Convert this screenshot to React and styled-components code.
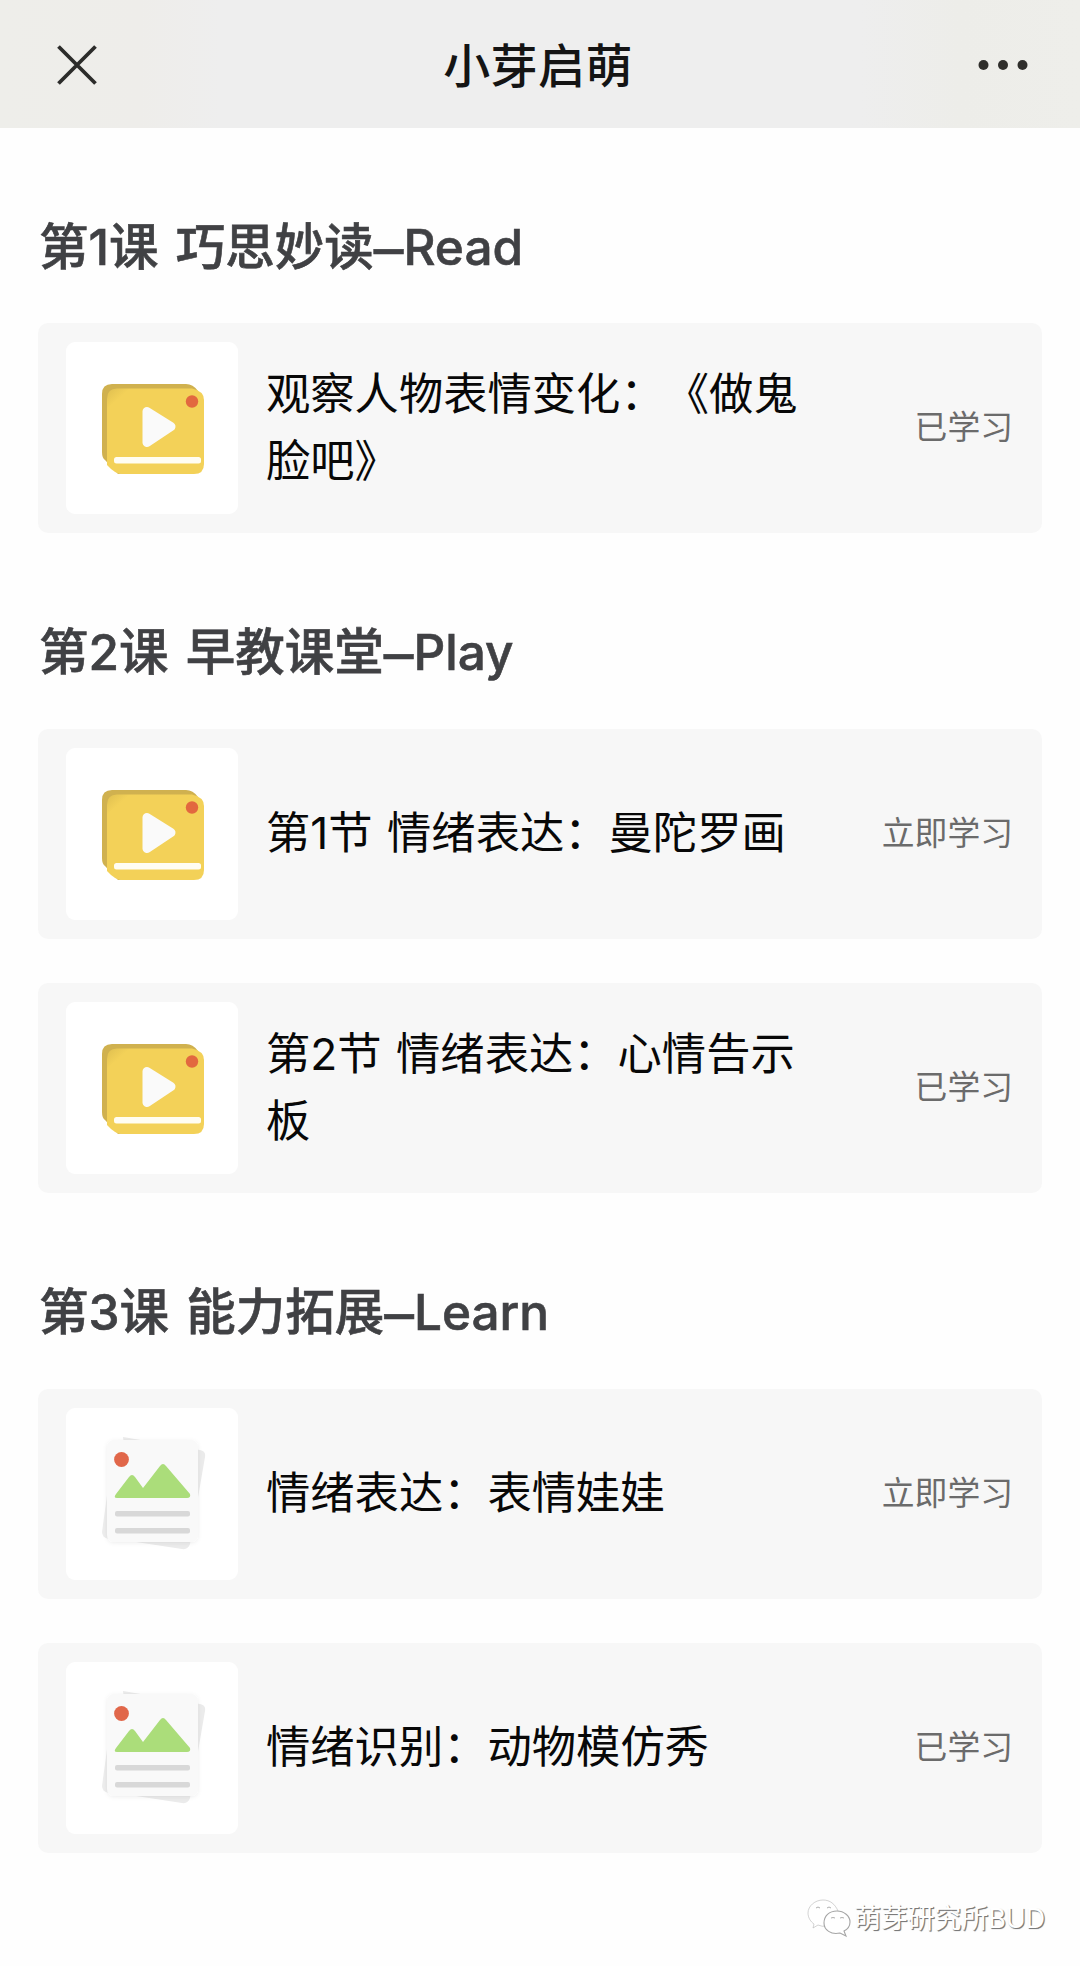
import React from "react";
import styled, { createGlobalStyle } from "styled-components";

const GlobalStyle = createGlobalStyle`
  * { box-sizing: border-box; }
  html, body { margin: 0; padding: 0; background: #fefefe; }
  body {
    font-family: Inter, "Noto Sans CJK SC", sans-serif;
    text-spacing-trim: space-all;
  }
  h1, h2, p { margin: 0; }
`;

const Page = styled.div`
  width: 1080px;
  height: 1966px;
  overflow: hidden;
  background: #fefefe;
  display: flex;
  flex-direction: column;
`;

const Header = styled.header`
  height: 128px;
  flex: none;
  padding: 2px 52px 0 56px;
  display: grid;
  grid-template-columns: 52px 1fr 52px;
  align-items: center;
  background: linear-gradient(90deg, #eeeeea 0, #eeedea 140px, #eeeeee 220px, #eeeeee 860px, #edede9 960px, #eeeeea 100%);
`;

const Title = styled.h1`
  padding: 2px 8px 0 0;
  text-align: center;
  font-size: 47px;
  line-height: 66px;
  font-weight: 500;
  letter-spacing: 0.4px;
  color: #141414;
`;

const HeaderIcon = styled.svg`
  display: block;
  width: ${(p) => p.$w}px;
  height: ${(p) => p.$h}px;
  justify-self: ${(p) => p.$side};
`;

const Content = styled.main`
  flex: 1;
  padding: 0 38px;
`;

const Section = styled.section`
  display: flex;
  flex-direction: column;
`;

const SectionTitle = styled.h2`
  height: ${(p) => (p.$first ? 195 : 196)}px;
  padding: 84px 0 0 1px;
  font-size: 49.5px;
  line-height: 70px;
  font-weight: 500;
  -webkit-text-stroke: 0.6px #404144;
  word-spacing: 4px;
  color: #404144;
  white-space: pre;
`;

const Dash = styled.span`
  font-size: 1.2em;
  line-height: 0;
  font-weight: 400;
  vertical-align: -5px;
`;

const Cards = styled.div`
  display: flex;
  flex-direction: column;
  gap: 44px;
`;

const Card = styled.article`
  height: 210px;
  padding: 0 29px 0 28px;
  display: flex;
  align-items: center;
  background: #f7f7f7;
  border-radius: 10px;
`;

const Thumb = styled.div`
  width: 172px;
  height: 172px;
  flex: none;
  border-radius: 9px;
  background: #fff;
`;

const Art = styled.svg`
  display: block;
  width: 172px;
  height: 172px;
`;

const Name = styled.p`
  width: 560px;
  margin-left: 28px;
  padding-bottom: 1px;
  font-size: 44.3px;
  line-height: 66.5px;
  color: #080808;
  word-spacing: 2px;
  white-space: pre-line;
`;

const Status = styled.span`
  margin-left: auto;
  padding-bottom: 2px;
  font-size: 32.8px;
  line-height: 46px;
  color: #6b6b6b;
  white-space: nowrap;
`;

const Watermark = styled.footer`
  height: 113px;
  padding: 41px 35px 0 0;
  display: flex;
  justify-content: flex-end;
  gap: 2px;
  font-size: 26.8px;
  line-height: 48px;
  color: #fff;
  text-shadow: 1px 1px 1px #777, 1px 1px 0 #999;
`;

const Bubbles = styled.svg`
  width: 48px;
  height: 48px;
  margin-top: 2px;
  flex: none;
`;

function VideoArt() {
  return (
    <Art viewBox="0 0 172 172">
      <defs>
        <linearGradient id="cover" x1="0" y1="0" x2="0.12" y2="0.12">
          <stop offset="0" stopColor="#dfbf50" />
          <stop offset="1" stopColor="#f3d158" />
        </linearGradient>
      </defs>
      <path d="M46 42H120Q127 42 132 49L128 122L52 132L39 118Q36 116 36 110V52Q36 42 46 42Z" fill="#d0b14f" />
      <path d="M51 46.5H126Q138 49 138 58V122Q138 132 128 132H56Q49 132 41 123V57Q41 46.5 51 46.5Z" fill="url(#cover)" />
      <path d="M81 69.5L105 84.5L81 100.5Z" fill="#fafafa" stroke="#fafafa" strokeWidth="9" strokeLinejoin="round" />
      <rect x="48" y="115" width="87" height="6.5" rx="2.5" fill="#fffdf2" />
      <circle cx="126" cy="59.5" r="6.2" fill="#e2683f" />
    </Art>
  );
}

function PictureArt() {
  return (
    <Art viewBox="0 0 172 172">
      <defs>
        <filter id="sheet" x="-20%" y="-20%" width="140%" height="140%">
          <feDropShadow dx="0" dy="1" stdDeviation="2" floodColor="#000" floodOpacity="0.07" />
        </filter>
      </defs>
      <path d="M57 29L134 42Q140 43 139 49L124 136Q122 142 116 141L70 134Z" fill="#ebebeb" />
      <path d="M42 80L36 124Q36 129 42 131L60 134Z" fill="#ededed" />
      <rect x="41" y="32" width="91" height="102" rx="7" fill="#f9f9f9" filter="url(#sheet)" />
      <circle cx="55.5" cy="51.5" r="7.4" fill="#e1674a" />
      <path d="M50 86L63 69Q66 65 69 69L77 80L94 58Q97 54 100 58L124 86Q125 90 121 90H51Q47 90 50 86Z" fill="#abdd7a" />
      <rect x="49" y="103" width="75" height="5.5" rx="2" fill="#d8d8d8" />
      <rect x="49" y="120" width="75" height="5.5" rx="2" fill="#d8d8d8" />
    </Art>
  );
}

const sections = [
  {
    title: "第1课 巧思妙读",
    tag: "Read",
    items: [{ name: "观察人物表情变化：《做鬼\n脸吧》", status: "已学习", kind: "video" }],
  },
  {
    title: "第2课 早教课堂",
    tag: "Play",
    items: [
      { name: "第1节 情绪表达：曼陀罗画", status: "立即学习", kind: "video" },
      { name: "第2节 情绪表达：心情告示\n板", status: "已学习", kind: "video" },
    ],
  },
  {
    title: "第3课 能力拓展",
    tag: "Learn",
    items: [
      { name: "情绪表达：表情娃娃", status: "立即学习", kind: "picture" },
      { name: "情绪识别：动物模仿秀", status: "已学习", kind: "picture" },
    ],
  },
];

export default function App() {
  return (
    <Page>
      <GlobalStyle />
      <Header>
        <HeaderIcon $w={42} $h={42} $side="start" viewBox="0 0 42 42">
          <path d="M2.5 2.5L39.5 39.5M39.5 2.5L2.5 39.5" stroke="#2c2c2a" strokeWidth="3.8" fill="none" />
        </HeaderIcon>
        <Title>小芽启萌</Title>
        <HeaderIcon $w={50} $h={12} $side="end" viewBox="0 0 50 12">
          <g fill="#2f2e2b">
            <circle cx="5.5" cy="6" r="5" />
            <circle cx="25" cy="6" r="5" />
            <circle cx="44.5" cy="6" r="5" />
          </g>
        </HeaderIcon>
      </Header>
      <Content>
        {sections.map((section, i) => (
          <Section key={section.title}>
            <SectionTitle $first={i === 0}>
              {section.title}
              <Dash>–</Dash>
              {section.tag}
            </SectionTitle>
            <Cards>
              {section.items.map((item) => (
                <Card key={item.name}>
                  <Thumb>{item.kind === "video" ? <VideoArt /> : <PictureArt />}</Thumb>
                  <Name>{item.name}</Name>
                  <Status>{item.status}</Status>
                </Card>
              ))}
            </Cards>
          </Section>
        ))}
      </Content>
      <Watermark>
        <Bubbles viewBox="0 0 48 48" fill="#fff" stroke="#a5a5a5" strokeWidth="0.9">
          <path d="M9 32L14 29Q18 31 23 30C32 28 36 22 34 15C31 8 26 4 19 4C11 4 4 10 4 17C4 22 7 26 10 28Z" strokeOpacity="0.55" />
          <path d="M42 40L36 37C27 39 20 34 20 27C20 20 25 15 33 15C40 15 46 20 46 26C46 30 44 33 40 35Z" strokeWidth="1.1" />
          <path d="M12 12q2-2 4 0M23 12q2-2 4 0M27 22q2-1 4 0M36 22q2-1 4 0" fill="none" />
        </Bubbles>
        <span>萌芽研究所BUD</span>
      </Watermark>
    </Page>
  );
}
